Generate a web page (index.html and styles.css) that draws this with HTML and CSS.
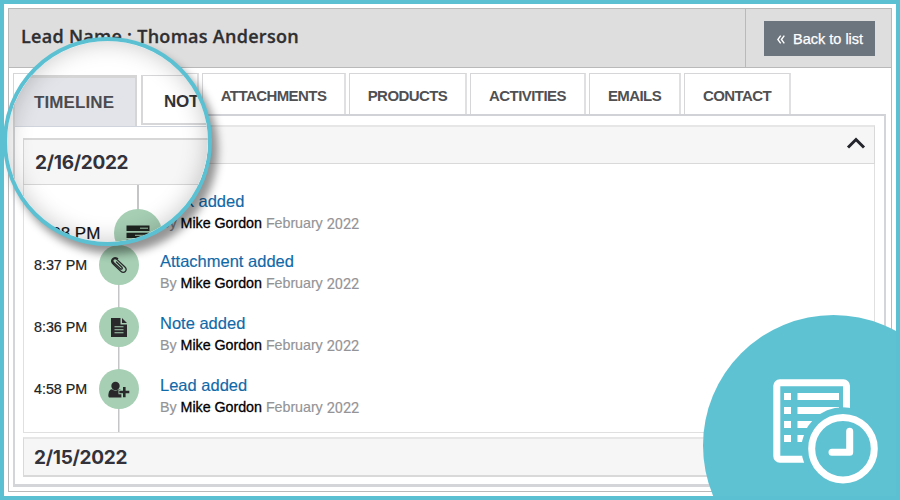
FILE: index.html
```html
<!DOCTYPE html>
<html lang="en">
<head>
<meta charset="utf-8">
<title>Lead timeline</title>
<link rel="stylesheet" href="styles.css">
</head>
<body>
<div class="page">
  <div class="frame">
    <header class="header">
      <h1>Lead Name : Thomas Anderson</h1>
      <div class="header-side">
        <a class="back"><svg class="back-icon" viewBox="0 0 8 9"><path d="M3.7.6.8 4.500l2.900 3.900M7.300.6 4.400 4.500l2.900 3.900"/></svg><span>Back to list</span></a>
      </div>
    </header>
    <nav class="tabs">
      <span class="tab timeline"></span>
      <span class="tab attachments">ATTACHMENTS</span>
      <span class="tab products">PRODUCTS</span>
      <span class="tab activities">ACTIVITIES</span>
      <span class="tab emails">EMAILS</span>
      <span class="tab contact">CONTACT</span>
    </nav>
    <main class="panel">
      <div class="day-head"><svg class="chevron" viewBox="0 0 20 12"><path d="m2 10.500 8-8 8 8"/></svg></div>
      <div class="day-body">
        <div class="event first">
          <span class="time"></span><span class="dot"></span>
          <div class="info"><b class="title">Task added</b><p>By <em>Mike Gordon</em> February <span class="year">2022</span></p></div>
        </div>
        <div class="event">
          <span class="time">8:37 PM</span>
          <span class="dot"><svg viewBox="0 0 20 20"><path class="clip" d="m7.500 7 5.200 5c1.500 1.500 0 3-1.600 1.500L4.800 7.800C2.200 5.300 5.200 2 8.100 4.600l7.600 7.200c3.500 3.500-.5 7.600-4.200 4.200L4.400 9.300C.2 5.200 4.700.7 8.700 3.600"/></svg></span>
          <div class="info"><b class="title">Attachment added</b><p>By <em>Mike Gordon</em> February <span class="year">2022</span></p></div>
        </div>
        <div class="event">
          <span class="time">8:36 PM</span>
          <span class="dot"><svg viewBox="0 0 20 20"><path d="M2 1h9.500v6.500H18V20H2zM13 1l5 5h-5z"/><path class="cut" d="M5.500 9.800h9M5.500 12.700h9M5.500 15.700h9"/></svg></span>
          <div class="info"><b class="title">Note added</b><p>By <em>Mike Gordon</em> February <span class="year">2022</span></p></div>
        </div>
        <div class="event">
          <span class="time">4:58 PM</span>
          <span class="dot"><svg class="wide" viewBox="0 0 22 18"><circle cx="7.500" cy="6" r="4.200"/><path d="M4 9.300c2 1.800 5 1.800 7 0 1.500.2 2 .7 2.500 1.600v6.600H2C0 17.500.2 15 .6 13.200 1 10.800 2.200 9.500 4 9.300z"/><path class="halo" d="M10.500 12h11M16 6.500v11"/><path class="plus" d="M11.300 12h10M16.300 7v10.200"/></svg></span>
          <div class="info"><b class="title">Lead added</b><p>By <em>Mike Gordon</em> February <span class="year">2022</span></p></div>
        </div>
      </div>
      <div class="day-head second"><span class="date">2/15/2022</span></div>
    </main>
  </div>

  <div class="lens">
    <div class="lens-tabs"><span class="lens-tab active">TIMELINE</span><span class="lens-tab notes">NOT</span></div>
    <div class="lens-panel">
      <div class="lens-day"><span class="date">2/16/2022</span></div>
      <div class="lens-event">
        <span class="lens-time">8:38 PM</span>
        <span class="lens-dot"><svg viewBox="0 0 24 20"><path d="M.5.500h23v5.500H.5zM.5 7.700h23v5.300H.5zM.5 14.700h23V20H.5z"/><path class="light" d="M14 3.200h8M9 10.300h13M17 17.300h5"/></svg></span>
      </div>
    </div>
  </div>

  <div class="badge">
    <svg viewBox="770 376 112 110">
      <rect class="line" x="776.800" y="382.800" width="69.700" height="76.400" rx="3"/>
      <path class="fill" d="M784 393h7v7h-7zM784 407h7v7h-7zM784 421h7v7h-7zM784 435h7v7h-7zM797.500 393H839v7h-41.500zM797.500 407H839v7h-41.500zM797.500 421H820v7h-22.500zM797.500 435H810v7h-12.500z"/>
      <circle class="gap" cx="843" cy="448.700" r="41.500"/>
      <circle class="line" cx="843" cy="448.700" r="31.300"/>
      <path class="line" d="M849.700 431.300V452.200H832"/>
    </svg>
  </div>
</div>
</body>
</html>
```
FILE: styles.css
```css
* { box-sizing: border-box; }
body { margin: 0; font-family: "Liberation Sans", Arial, sans-serif; }
svg { display: block; flex: none; }

.page {
  position: relative;
  width: 900px;
  height: 500px;
  padding: 4px;
  overflow: hidden;
  background: #fff;
  border: 4px solid #5bc1d2;
}
.frame { width: 884px; height: 484px; border: 1px solid #b9b9b9; }

.header {
  display: flex;
  height: 59px;
  background: #dedede;
  border-bottom: 1px solid #b9b9b9;
}
.header h1 {
  flex: 1;
  margin: 0;
  padding-left: 12px;
  font: 600 18px/55px "Open Sans", sans-serif;
  letter-spacing: .28px;
  color: #2f2f31;
  -webkit-text-stroke: .3px #2f2f31;
  white-space: nowrap;
}
.header-side {
  width: 146px;
  padding: 12px 0 0 18px;
  border-left: 1px solid #b9b9b9;
}
.back {
  display: flex;
  align-items: center;
  width: 111px;
  height: 35px;
  padding-left: 13px;
  gap: 8px;
  background: #6c757e;
  color: #fff;
  font-size: 14.5px;
  white-space: nowrap;
  -webkit-text-stroke: .25px #fff;
}
.back span { padding-top: 1px; }
.back-icon { width: 8px; height: 9px; margin-top: 1px; fill: none; stroke: #fff; stroke-width: 1.4; }

.tabs { display: flex; height: 46px; padding: 5px 0 0 4px; }
.tab {
  height: 41px;
  margin-right: 3px;
  border: 1px solid #d6d6d8;
  border-right: 2px solid #e0e0e2;
  border-bottom: 0;
  text-align: center;
  font-size: 15px;
  font-weight: bold;
  line-height: 44px;
  letter-spacing: -.57px;
  color: #505052;
}
.timeline { width: 186px; }
.attachments { width: 144px; }
.products { width: 118px; }
.activities { width: 116px; }
.emails { width: 92px; }
.contact { width: 107px; }

.panel {
  width: 873px;
  height: 373px;
  margin-left: 4px;
  padding: 9px 9px 0 8px;
  border: 2px solid #d4d5d8;
  border-top-color: #d0d2d7;
  border-bottom-width: 3px;
}
.day-head {
  display: flex;
  align-items: center;
  height: 39px;
  padding: 0 8px 0 10px;
  border: 1px solid #d9d9da;
  border-top: 2px solid #e6e6e6;
  background: #f6f6f6;
}
.chevron { width: 20px; height: 12px; margin: -5px 0 0 auto; fill: none; stroke: #24242c; stroke-width: 3; }
.second { margin-top: 4px; height: 40px; border-bottom-width: 2px; }
.date { font: 700 19px/1 Inter, sans-serif; letter-spacing: -.3px; color: #33323a; }

.day-body {
  height: 269px;
  padding-top: 8px;
  border: 1px solid #e0e0e0;
  border-top: 0;
  background: linear-gradient(#c5c5c7, #c5c5c7) 94px 0 / 1.5px 100% no-repeat;
}
.event { display: flex; align-items: center; height: 62px; }
.time {
  width: 75px;
  padding-left: 10px;
  font-size: 14.3px;
  color: #222;
  -webkit-text-stroke: .2px #222;
}
.dot {
  display: flex;
  align-items: center;
  justify-content: center;
  width: 40px;
  height: 40px;
  border-radius: 50%;
  background: #a6cfb4;
}
.dot svg { width: 20px; height: 20px; fill: #29292b; }
.dot .wide { width: 22px; height: 18px; }
.dot .clip { fill: none; stroke: #29292b; stroke-width: 1.25; stroke-linecap: round; }
.cut { stroke: #a6cfb4; stroke-width: 1.1; }
.halo { stroke: #a6cfb4; stroke-width: 4.5; }
.plus { stroke: #29292b; stroke-width: 2.6; }
.info { margin-left: 21px; padding-top: 15px; white-space: nowrap; }
.first .info { padding-top: 19px; }
.title { display: block; font-size: 16.5px; font-weight: normal; line-height: 20px; color: #1169a8; -webkit-text-stroke: .15px #1169a8; }
.info p { display: flex; gap: 4px; margin: 3px 0 0; font-size: 14.3px; line-height: 19px; color: #949496; -webkit-text-stroke: .15px #949496; letter-spacing: -.05px; }
.info em { font-style: normal; color: #000; -webkit-text-stroke: .3px #000; }
.year { padding-top: 1px; font-family: Roboto, sans-serif; font-size: 14.6px; letter-spacing: -.1px; }

.lens {
  position: absolute;
  left: -1px;
  top: 33px;
  width: 209px;
  height: 209px;
  padding-top: 34px;
  overflow: hidden;
  border: 4px solid #5bc1d2;
  border-radius: 50%;
  background: #fff;
  box-shadow: 6px 8px 8px rgba(0, 0, 0, .42);
}
.lens::after {
  content: "";
  position: absolute;
  inset: 0;
  border-radius: 50%;
  box-shadow: inset 0 0 24px rgba(0, 0, 0, .22);
}
.lens-tabs { display: flex; gap: 4px; width: 240px; height: 51px; padding-left: 6px; }
.lens-tab { font-size: 17px; font-weight: bold; line-height: 50px; color: #4b4b4f; letter-spacing: .1px; }
.active {
  width: 124px;
  padding-left: 19px;
  border: solid #d5d5d6;
  border-width: 3px 2px 0;
  background: #e2e4e9;
}
.notes {
  width: 90px;
  height: 50px;
  padding-left: 21px;
  line-height: 52px;
  letter-spacing: -.3px;
  border: 2px solid #d7d7d9;
  border-top-width: 1px;
  color: #333337;
}
.lens-panel {
  width: 240px;
  height: 140px;
  margin-left: 6px;
  padding: 11px 0 0 8px;
  border-left: 2px solid #d3d4d6;
  border-top: 1px solid #d0d5dd;
}
.lens-day {
  display: flex;
  align-items: center;
  height: 47px;
  padding-left: 11px;
  border: 1px solid #d7d7d7;
  border-top-width: 2px;
  background: #f6f6f6;
}
.lens-event {
  display: flex;
  height: 90px;
  padding-top: 24px;
  border-left: 1px solid #e0e0e0;
  background: linear-gradient(#c5c5c7, #c5c5c7) 113px 0 / 2px 100% no-repeat;
}
.lens-time { width: 90px; padding: 15px 0 0 13px; font-size: 17px; color: #111; white-space: nowrap; -webkit-text-stroke: .2px #111; }
.lens-dot {
  display: flex;
  justify-content: center;
  width: 48px;
  height: 48px;
  padding-top: 16px;
  border-radius: 50%;
  background: #a6cfb4;
}
.lens-dot svg { width: 24px; height: 20px; fill: #1f2421; }
.light { stroke: #a9cfb4; stroke-width: 1; }

.badge {
  position: absolute;
  left: 698.5px;
  top: 310.5px;
  width: 261px;
  height: 261px;
  padding: 61.5px 0 0 67.5px;
  border-radius: 50%;
  background: #5ec2d3;
}
.badge svg { width: 112px; height: 110px; }
.line { fill: none; stroke: #fff; stroke-width: 7; stroke-linecap: round; stroke-linejoin: round; }
.fill { fill: #fff; }
.gap { fill: #5ec2d3; }
```
